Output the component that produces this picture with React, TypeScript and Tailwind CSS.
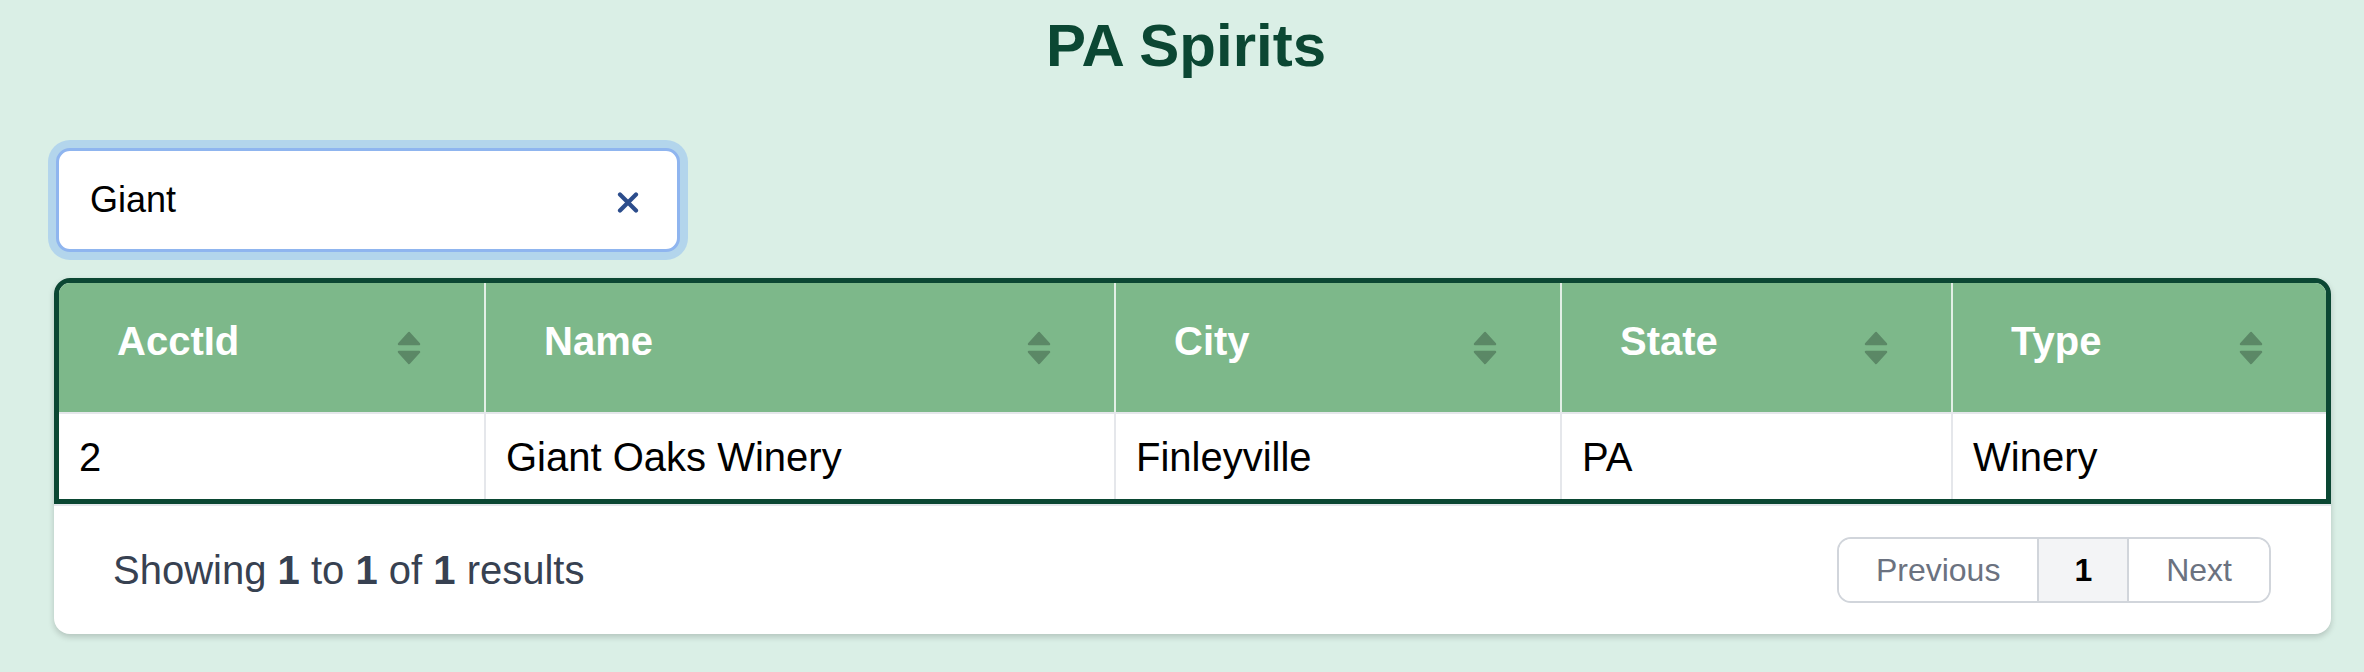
import React from "react";

function SortIcon() {
  return (
    <svg width="24" height="34" viewBox="0 0 24 34" className="shrink-0 self-center">
      <path d="M12 2 L22 13 L2 13 Z" fill="#5b8866" stroke="#5b8866" strokeWidth="2.5" strokeLinejoin="round" />
      <path d="M2 21 L22 21 L12 32 Z" fill="#5b8866" stroke="#5b8866" strokeWidth="2.5" strokeLinejoin="round" />
    </svg>
  );
}

const headers = ["AcctId", "Name", "City", "State", "Type"];
const row = ["2", "Giant Oaks Winery", "Finleyville", "PA", "Winery"];

export default function App() {
  return (
    <div className="min-h-screen bg-[#daefe6] font-['Liberation_Sans',Arial,sans-serif]">
      <h1 className="pt-[11px] pl-[8px] text-center text-[60px] leading-[69px] font-bold text-[#0b4733]">
        PA Spirits
      </h1>
      <div className="pl-[54px] pr-[33px]">
        <div className="mt-[68px] ml-[2px] flex h-[104px] w-[624px] items-center justify-between rounded-[14px] border-[3px] border-[#8fb5ef] bg-white pl-[31px] pr-[38px] shadow-[0_0_0_8px_#b3d5ec]">
          <span className="text-[36px] leading-[42px] text-black">Giant</span>
          <svg width="22" height="21" viewBox="0 0 22 21" className="mt-[4px]">
            <path d="M3 2.5 L19 18.5 M19 2.5 L3 18.5" stroke="#2c4d8c" strokeWidth="4.2" strokeLinecap="round" />
          </svg>
        </div>

        <div className="mt-[26px] rounded-[16px] bg-white shadow-[0_3px_6px_rgba(0,0,0,0.18)]">
          <div className="overflow-hidden rounded-t-[16px] border-[5px] border-[#0b4733]">
            <div className="grid h-[129px] grid-cols-[425px_630px_446px_391px_1fr] bg-[#7db88a]">
              {headers.map((h, i) => (
                <div
                  key={h}
                  className={`flex justify-between pl-[58px] pr-[63px] ${i > 0 ? "border-l-2 border-[#e3efe6]" : ""}`}
                >
                  <span className="self-start pt-[35px] text-[40px] leading-[46px] font-bold text-white">{h}</span>
                  <SortIcon />
                </div>
              ))}
            </div>
            <div className="grid h-[87px] grid-cols-[425px_630px_446px_391px_1fr] border-t-2 border-[#e5e7eb] bg-white">
              {row.map((c, i) => (
                <div
                  key={i}
                  className={`flex items-center pl-[20px] text-[40px] leading-[46px] text-black ${i > 0 ? "border-l-2 border-[#e5e7eb]" : ""}`}
                >
                  {c}
                </div>
              ))}
            </div>
          </div>
          <div className="flex h-[130px] items-center justify-between border-t-2 border-[#e5e7eb] pl-[59px] pr-[60px]">
            <p className="text-[40px] leading-[46px] text-[#374151]">
              Showing <span className="font-bold">1</span> to <span className="font-bold">1</span> of{" "}
              <span className="font-bold">1</span> results
            </p>
            <div className="flex h-[66px] overflow-hidden rounded-[14px] border-2 border-[#d1d5db] text-[32px]">
              <span className="flex items-center bg-white px-[37px] text-[#6b7280]">Previous</span>
              <span className="flex items-center border-x-2 border-[#d1d5db] bg-[#f3f4f6] px-[35px] font-bold text-black">1</span>
              <span className="flex items-center bg-white px-[37px] text-[#6b7280]">Next</span>
            </div>
          </div>
        </div>
      </div>
    </div>
  );
}
